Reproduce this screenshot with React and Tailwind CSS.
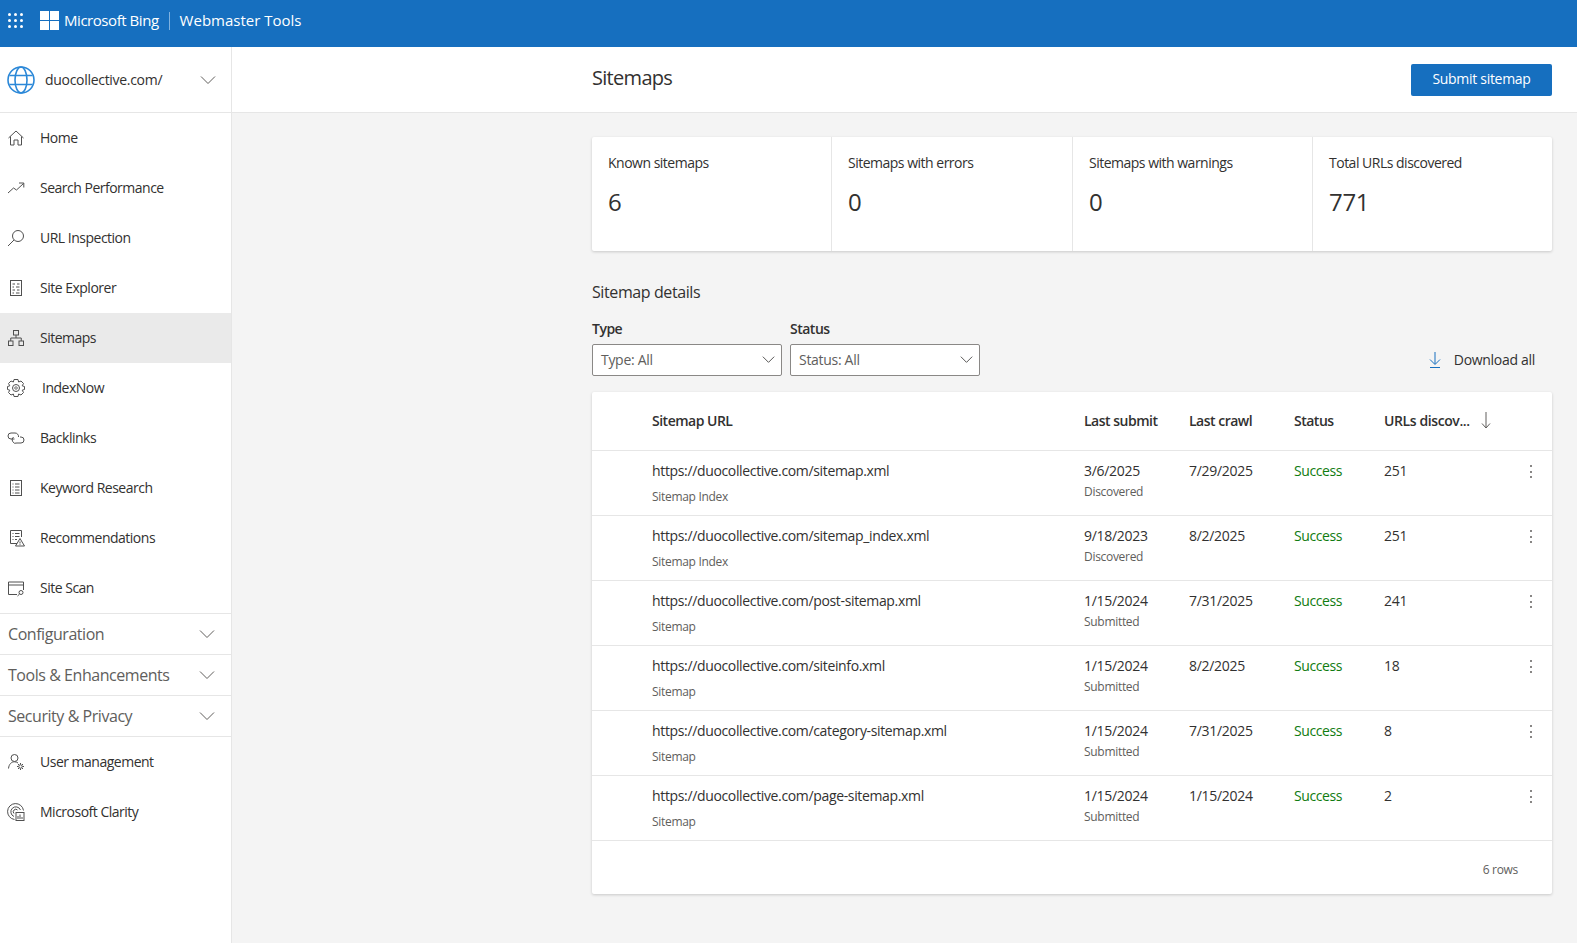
import React from 'react';

const Chevron = ({ className = 'w-4 h-4' }) => (
  <svg viewBox="0 0 16 16" className={className} fill="none" stroke="currentColor" strokeWidth="1">
    <path d="M1 4.5 L8 11.5 L15 4.5" />
  </svg>
);

const iconProps = { viewBox: '0 0 18 18', className: 'w-[18px] h-[18px]', fill: 'none', stroke: '#505050', strokeWidth: 1 };

const HomeIcon = () => (
  <svg {...iconProps}><path d="M1.5 9 L9 2 L16.5 9 M3.5 7.5 V16 H7 V11 H11 V16 H14.5 V7.5" /></svg>
);
const TrendIcon = () => (
  <svg {...iconProps}><path d="M1 14 L6.5 9 L9.5 11 L16.5 4.5 M12 4 H16.8 V8.5" /></svg>
);
const SearchIcon = () => (
  <svg {...iconProps}><circle cx="11" cy="7" r="5.5" /><path d="M7 11 L1 17" /></svg>
);
const SiteExplorerIcon = () => (
  <svg {...iconProps}><rect x="3.5" y="1.5" width="11" height="15" /><path d="M5.5 5 H8 M10 5 H12.5 M5.5 8 H7 M9 8 H12.5 M5.5 11 H8 M10 11 H12.5 M5.5 14 H7 M9 14 H12.5" /></svg>
);
const SitemapIcon = () => (
  <svg {...iconProps}><rect x="6.5" y="1.5" width="5" height="4.5" /><rect x="1.5" y="12" width="4.5" height="4.5" /><rect x="12" y="12" width="4.5" height="4.5" /><path d="M9 6 V9 M3.75 12 V9 H14.25 V12" /></svg>
);
const IndexNowIcon = () => (
  <svg {...iconProps} viewBox="0 0 20 20" className="w-5 h-5 shrink-0">
    <path d="M8 1.5 H12 L12.6 4 L15 3 L17.5 5.5 L16.2 7.8 L18.5 8.5 V11.5 L16.2 12.2 L17.5 14.5 L15 17 L12.6 16 L12 18.5 H8 L7.4 16 L5 17 L2.5 14.5 L3.8 12.2 L1.5 11.5 V8.5 L3.8 7.8 L2.5 5.5 L5 3 L7.4 4 Z" />
    <circle cx="10" cy="10" r="3.5" />
    <path d="M8.5 10 L10 8.5 L11.5 10 L10 11.5 Z" />
  </svg>
);
const BacklinksIcon = () => (
  <svg {...iconProps}><path d="M7.5 10 H4 A3 3 0 0 1 4 4 H8 A3.5 3.5 0 0 1 11.5 8" /><path d="M6.5 8 A3.5 3.5 0 0 0 10 14 H14 A3 3 0 0 0 14 8 H13" /></svg>
);
const KeywordIcon = () => (
  <svg {...iconProps}><rect x="3.5" y="1.5" width="11" height="15" /><path d="M5.5 5 H6.5 M8 5 H12.5 M5.5 8 H6.5 M8 8 H12.5 M5.5 11 H6.5 M8 11 H12.5 M5.5 14 H6.5 M8 14 H12.5" /></svg>
);
const RecommendIcon = () => (
  <svg {...iconProps}><path d="M10 14.5 H3.5 V1.5 H14.5 V8" /><path d="M5.5 4.5 H6.5 M8 4.5 H12.5 M5.5 7.5 H6.5 M8 7.5 H12.5 M5.5 10.5 H6.5 M8 10.5 H10" /><path d="M13 9.5 L17.5 17 H8.5 Z M13 12.5 V14.5 M13 15.3 V16" /></svg>
);
const SiteScanIcon = () => (
  <svg {...iconProps}><path d="M10 15.5 H1.5 V3 H16.5 V11" /><path d="M1.5 6 H16.5" /><circle cx="14" cy="13.5" r="2" /><path d="M12.6 15 L10.5 17" /></svg>
);
const UserIcon = () => (
  <svg {...iconProps}><circle cx="7.5" cy="5" r="3.5" /><path d="M1.5 15.5 C2 11 4.5 8.8 7.5 8.8 C8.8 8.8 10 9.2 11 10" /><circle cx="13.5" cy="13.5" r="1.7" /><path d="M13.5 10 V11.5 M13.5 15.5 V17 M10 13.5 H11.5 M15.5 13.5 H17 M11 11 L12 12 M15 15 L16 16 M16 11 L15 12 M12 15 L11 16" /></svg>
);
const ClarityIcon = () => (
  <svg {...iconProps}><path d="M7.5 16.5 A8 8 0 1 1 16.5 7.5" /><path d="M7 13.5 A5 5 0 1 1 13.5 7" /><path d="M7 10.5 A2.2 2.2 0 1 1 10.5 7" /><rect x="9" y="9.5" width="8" height="8" fill="#fff" /><path d="M11 16 V13 M13 16 V11.5 M15 16 V14" /></svg>
);

const navItems = [
  { label: 'Home', icon: HomeIcon },
  { label: 'Search Performance', icon: TrendIcon },
  { label: 'URL Inspection', icon: SearchIcon },
  { label: 'Site Explorer', icon: SiteExplorerIcon },
  { label: 'Sitemaps', icon: SitemapIcon, active: true },
  { label: 'IndexNow', icon: IndexNowIcon, wide: true },
  { label: 'Backlinks', icon: BacklinksIcon },
  { label: 'Keyword Research', icon: KeywordIcon },
  { label: 'Recommendations', icon: RecommendIcon },
  { label: 'Site Scan', icon: SiteScanIcon },
];

const stats = [
  { label: 'Known sitemaps', value: '6' },
  { label: 'Sitemaps with errors', value: '0' },
  { label: 'Sitemaps with warnings', value: '0' },
  { label: 'Total URLs discovered', value: '771' },
];

const rows = [
  { url: 'https://duocollective.com/sitemap.xml', type: 'Sitemap Index', submit: '3/6/2025', how: 'Discovered', crawl: '7/29/2025', urls: '251' },
  { url: 'https://duocollective.com/sitemap_index.xml', type: 'Sitemap Index', submit: '9/18/2023', how: 'Discovered', crawl: '8/2/2025', urls: '251' },
  { url: 'https://duocollective.com/post-sitemap.xml', type: 'Sitemap', submit: '1/15/2024', how: 'Submitted', crawl: '7/31/2025', urls: '241' },
  { url: 'https://duocollective.com/siteinfo.xml', type: 'Sitemap', submit: '1/15/2024', how: 'Submitted', crawl: '8/2/2025', urls: '18' },
  { url: 'https://duocollective.com/category-sitemap.xml', type: 'Sitemap', submit: '1/15/2024', how: 'Submitted', crawl: '7/31/2025', urls: '8' },
  { url: 'https://duocollective.com/page-sitemap.xml', type: 'Sitemap', submit: '1/15/2024', how: 'Submitted', crawl: '1/15/2024', urls: '2' },
];

const NavRow = ({ item }) => {
  const Icon = item.icon;
  return (
    <div className={`h-[50px] flex items-center pl-[7px] text-[14px] tracking-[-0.5px] text-[#323130] ${item.active ? 'bg-[#eaeaea]' : ''}`}>
      <div className="w-[18px] flex justify-center"><Icon /></div>
      <span className={`pb-[2px] ${item.wide ? 'ml-[17px]' : 'ml-[15px]'}`}>{item.label}</span>
    </div>
  );
};

const Section = ({ label }) => (
  <div className="h-[41px] border-b border-[#e6e6e6] flex items-center justify-between pl-2 pr-4 text-[16px] tracking-[-0.45px] text-[#605e5c]">
    <span>{label}</span>
    <Chevron />
  </div>
);

const Select = ({ label, value }) => (
  <div className="w-[190px]">
    <div className="text-[14px] font-semibold tracking-[-0.5px] text-[#323130] mb-[5px] leading-5">{label}</div>
    <div className="h-8 pb-[2px] bg-white border border-[#8a8886] rounded-[2px] flex items-center justify-between pl-2 pr-[6px] text-[14px] text-[#605e5c]">
      <span>{value}</span>
      <Chevron className="w-[13px] h-[13px] text-[#323130]" />
    </div>
  </div>
);

const cols = 'grid grid-cols-[60px_432px_105px_105px_90px_1fr]';

export default function App() {
  return (
    <div className="h-screen overflow-hidden flex flex-col bg-[#f4f4f4] font-['Open_Sans','Noto_Sans',sans-serif] tracking-[-0.3px]">
      {/* Top bar */}
      <div className="h-[47px] shrink-0 bg-[#166fbf] text-white flex items-center pl-2 pb-[6px]">
        <div className="grid grid-cols-3 gap-[3px] w-[15px] mr-[17px]">
          {Array.from({ length: 9 }).map((_, i) => (
            <span key={i} className="w-[3px] h-[3px] rounded-full bg-white" />
          ))}
        </div>
        <div className="grid grid-cols-2 gap-px w-[19px] h-[19px]">
          <span className="bg-white" /><span className="bg-white" /><span className="bg-white" /><span className="bg-white" />
        </div>
        <span className="ml-[5px] text-[15px] font-medium tracking-[-0.45px]">Microsoft Bing</span>
        <span className="w-px h-[18px] bg-[#7fb2e0] ml-[10px] mr-[10px]" />
        <span className="text-[15px] font-medium tracking-normal">Webmaster Tools</span>
      </div>

      <div className="flex flex-1 min-h-0">
        {/* Sidebar */}
        <div className="w-[232px] shrink-0 bg-white border-r border-[#e6e6e6] flex flex-col">
          <div className="h-[66px] shrink-0 border-b border-[#e6e6e6] flex items-center pl-[7px] pr-[15px]">
            <svg viewBox="0 0 28 28" className="w-7 h-7" fill="none" stroke="#2b88d8" strokeWidth="1.6">
              <circle cx="14" cy="14" r="13" />
              <ellipse cx="14" cy="14" rx="6" ry="13" />
              <path d="M2.5 9.5 H25.5 M2.5 18.5 H25.5" />
            </svg>
            <span className="ml-[10px] text-[14px] text-[#323130]">duocollective.com/</span>
            <Chevron className="w-4 h-4 ml-auto text-[#605e5c]" />
          </div>
          <div className="border-b border-[#e6e6e6]">
            {navItems.map(item => <NavRow key={item.label} item={item} />)}
          </div>
          <Section label="Configuration" />
          <Section label="Tools & Enhancements" />
          <Section label="Security & Privacy" />
          <NavRow item={{ label: 'User management', icon: UserIcon }} />
          <NavRow item={{ label: 'Microsoft Clarity', icon: ClarityIcon }} />
        </div>

        {/* Main */}
        <div className="flex-1 min-w-0">
          <div className="h-[66px] bg-white border-b border-[#e6e6e6] pl-[360px] pr-[25px] flex items-center justify-between">
            <h1 className="text-[20px] font-normal tracking-[-0.7px] text-[#323130] relative -top-[2px]">Sitemaps</h1>
            <button className="w-[141px] h-8 pb-[2px] bg-[#166fbf] rounded-[2px] text-white text-[14px] font-medium">Submit sitemap</button>
          </div>

          <div className="pl-[360px] pr-[25px] pt-6">
            {/* Stat cards */}
            <div className="grid grid-cols-[240px_241px_240px_1fr] h-[114px] bg-white rounded-[2px] shadow-[0_1px_3px_rgba(0,0,0,0.18)] divide-x divide-[#e6e6e6]">
              {stats.map(s => (
                <div key={s.label} className="pl-4 pt-4">
                  <div className="text-[14px] leading-5 tracking-[-0.5px] text-[#323130]">{s.label}</div>
                  <div className="text-[24px] leading-8 mt-[13px] text-[#323130]">{s.value}</div>
                </div>
              ))}
            </div>

            <h2 className="text-[16px] font-normal leading-[22px] tracking-[-0.4px] mt-[30px] text-[#323130]">Sitemap details</h2>

            <div className="flex items-end justify-between mt-4">
              <div className="flex gap-2">
                <Select label="Type" value="Type: All" />
                <Select label="Status" value="Status: All" />
              </div>
              <div className="h-8 pb-[2px] flex items-center pr-[17px] text-[14px] font-medium tracking-[-0.3px] text-[#323130]">
                <svg viewBox="0 0 14 18" className="w-[14px] h-[18px] mr-[10px] relative top-px -left-[2px]" fill="none" stroke="#166fbf" strokeWidth="1">
                  <path d="M7 1 V13 M2 8.5 L7 13.5 L12 8.5 M2 16.5 H12" />
                </svg>
                Download all
              </div>
            </div>

            {/* Table */}
            <div className="mt-4 bg-white rounded-[2px] shadow-[0_1px_3px_rgba(0,0,0,0.18)] text-[14px] text-[#323130]">
              <div className={`${cols} h-[59px] pb-[2px] items-center border-b border-[#e6e6e6] font-semibold tracking-[-0.5px]`}>
                <span className="col-start-2">Sitemap URL</span>
                <span>Last submit</span>
                <span>Last crawl</span>
                <span>Status</span>
                <span className="flex items-center tracking-[-0.4px]">
                  URLs discov...
                  <svg viewBox="0 0 12 18" className="w-3 h-[18px] ml-[10px]" fill="none" stroke="#605e5c" strokeWidth="1">
                    <path d="M6 1 V17 M2 12.5 L6 17 L10 12.5" />
                  </svg>
                </span>
              </div>
              {rows.map(row => (
                <div key={row.url} className={`${cols} h-[65px] border-b border-[#e6e6e6] pt-[10px]`}>
                  <div className="col-start-2">
                    <div className="leading-5 tracking-[-0.35px]">{row.url}</div>
                    <div className="text-[12px] leading-4 mt-[7.5px] text-[#605e5c]">{row.type}</div>
                  </div>
                  <div>
                    <div className="leading-5">{row.submit}</div>
                    <div className="text-[12px] leading-4 mt-[3px] text-[#605e5c]">{row.how}</div>
                  </div>
                  <div className="leading-5">{row.crawl}</div>
                  <div className="leading-5 tracking-[-0.4px] text-[#107c10]">Success</div>
                  <div className="flex justify-between pr-5">
                    <span className="leading-5">{row.urls}</span>
                    <span className="flex flex-col gap-[3.5px] pt-1">
                      <span className="w-[2px] h-[2px] bg-[#605e5c] rounded-full" />
                      <span className="w-[2px] h-[2px] bg-[#605e5c] rounded-full" />
                      <span className="w-[2px] h-[2px] bg-[#605e5c] rounded-full" />
                    </span>
                  </div>
                </div>
              ))}
              <div className="h-[53px] pt-1 flex items-center justify-end pr-[34px] text-[12px] text-[#605e5c]">6 rows</div>
            </div>
          </div>
        </div>
      </div>
    </div>
  );
}
